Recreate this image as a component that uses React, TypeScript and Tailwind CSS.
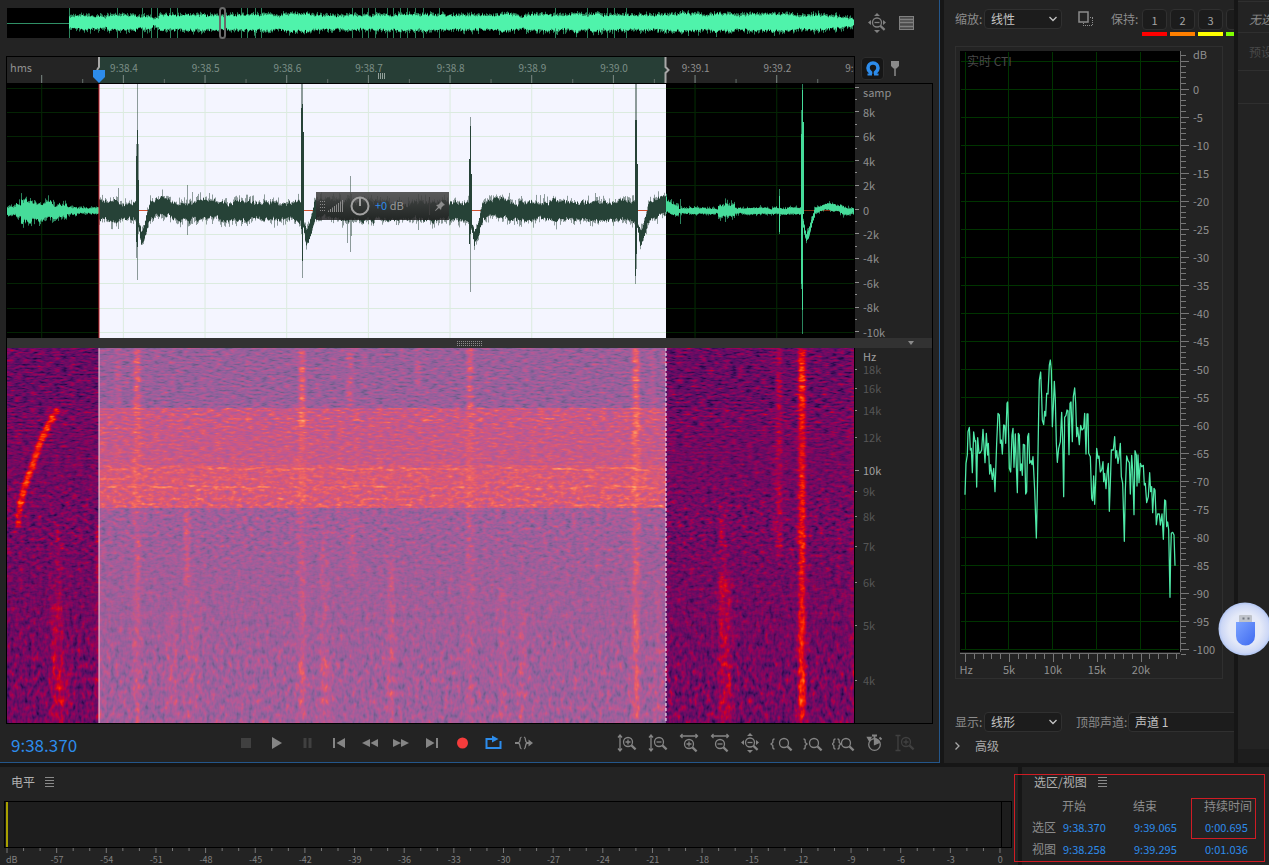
import type { ReactNode } from "react";

function createRandom(seed: number) {
  let s = seed;
  return () => {
    s = (s * 1664525 + 1013904223) % 4294967296;
    return s / 4294967296;
  };
}

/* ---------- overview waveform ---------- */
function buildOverview() {
  const rnd = createRandom(7);
  const spikes = [62, 110, 135, 144, 150, 163, 170, 234, 240, 248, 254, 345, 355, 361, 368, 380, 386, 393, 400, 408, 416, 432, 548, 580, 600, 607, 619];
  let core = "";
  let haze = "";
  let drift = 0;
  for (let x = 62; x < 847; x++) {
    drift = drift * 0.85 + (rnd() - 0.5) * 1.6;
    let a = 8.2;
    if (x < 100) a = 6.8;
    if (x > 128 && x < 152) a = 5.5;
    if (x > 145 && x < 149) a = 3.5;
    if (x > 812 && x < 830) a = 6;
    if (x > 829) a = 4;
    const t = Math.max(2, a + drift) * (0.75 + rnd() * 0.25);
    const b = Math.max(2, a + drift) * (0.75 + rnd() * 0.3);
    core += `M${x + 0.5} ${(14.5 - t).toFixed(1)}V${(14.5 + b).toFixed(1)}`;
    haze += `M${x + 0.5} ${(14.5 - t - rnd() * 3).toFixed(1)}V${(14.5 + b + rnd() * rnd() * 5).toFixed(1)}`;
  }
  spikes.forEach((x) => {
    haze += `M${x + 0.5} 0V30`;
  });
  return { core, haze };
}

/* ---------- main waveform ---------- */
const CLICKS = [130, 295, 463, 629, 795];

function baseline(x: number) {
  for (const c of CLICKS) {
    const d = x - c;
    if (d >= 1 && d < 4) return 8 + d * 5;
    if (d >= 4 && d < 7) return 27 - (d - 4) * 2;
    if (d >= 7 && d < 13) return 20 - (d - 7) * 3.5;
    if (d >= 13 && d < 40) return -4 * Math.sin(((d - 13) / 27) * Math.PI);
  }
  return 0;
}

function amplitude(x: number) {
  if (x < 92) {
    if (x < 9) return 4;
    if (x < 14) return 7;
    if (x < 25) return 13;
    if (x < 48) return 8.5;
    if (x < 60) return 7;
    if (x < 70) return 4;
    return 3;
  }
  if (x < 660) {
    for (const c of CLICKS) if (x - c > 0 && x - c < 12) return x - c < 3 ? 4 : 8;
    return 10;
  }
  if (x > 710 && x < 728) return 7;
  if (x < 672) return 5.5;
  if (x > 796 && x < 809) return 4;
  if (x > 832) return 4.2;
  return 3.1;
}

function buildWave() {
  const rnd = createRandom(41);
  const mid = 127;
  let core = "";
  let haze = "";
  let up = 0;
  let down = 0;
  for (let x = 0; x < 847; x++) {
    const a = amplitude(x);
    const m = mid + baseline(x);
    up = up * 0.75 + (rnd() - 0.5) * 0.34;
    down = down * 0.75 + (rnd() - 0.5) * 0.34;
    const t = a * (0.74 + up + rnd() * 0.25);
    const b = a * (0.74 + down + rnd() * 0.25);
    core += `M${x + 0.5} ${(m - t).toFixed(1)}V${(m + b).toFixed(1)}`;
    haze += `M${x + 0.5} ${(m - t - rnd() * rnd() * a * 0.9).toFixed(1)}V${(m + b + rnd() * rnd() * a * 0.8).toFixed(1)}`;
  }
  const solid: number[][] = [
    [129, 72, 158], [130, 46, 163], [131, 96, 140],
    [294, 24, 145], [295, 20, 177], [296, 48, 140],
    [462, 75, 160], [463, 42, 150], [464, 90, 140],
    [628, 36, 192], [629, 36, 170], [630, 80, 140],
    [794, 50, 200], [795, 6, 226], [796, 38, 130],
    [772, 112, 148],
  ];
  const faint: number[][] = [
    [111, 104, 145], [130, 0, 196], [129, 60, 174], [131, 60, 150], [180, 101, 151], [185, 108, 140],
    [295, 0, 194], [294, 0, 150], [340, 112, 159], [343, 92, 168], [344, 110, 152],
    [411, 110, 146], [463, 33, 208], [629, 0, 185], [628, 0, 200], [795, 0, 250], [794, 26, 205], [772, 105, 150],
    [718, 115, 138], [673, 115, 140],
  ];
  solid.forEach(([x, a, b]) => (core += `M${x + 0.5} ${a}V${b}`));
  faint.forEach(([x, a, b]) => (haze += `M${x + 0.5} ${a}V${b}`));
  return { core, haze };
}

const OVERVIEW = buildOverview();
const WAVE = buildWave();

/* ---------- spectrogram energy map ---------- */
type Mark = { x: number; y: number; w: number; h: number; o: number };

function buildBandMarks() {
  const rnd = createRandom(99);
  const marks: Mark[] = [];
  const lines: [number, number, number][] = [
    [60, 0.14, 0.7], [66, 0.14, 0.4], [71, 0.26, 0.4], [78, 0.11, 0.4], [84, 0.1, 0.4], [94, 0.16, 0.3], [102, 0.1, 0.4],
    [110, 0.1, 0.5], [120, 0.4, 0.8], [129, 0.24, 0.4], [138, 0.42, 0.85], [140, 0.24, 0.4], [150, 0.26, 0.5], [156, 0.34, 0.55],
  ];
  lines.forEach(([y, o, density]) => {
    let x = 92;
    while (x < 651) {
      const w = 4 + rnd() * 10;
      if (rnd() < density) marks.push({ x, y: y + Math.round(rnd() * 2 - 1), w: Math.min(w, 659 - x), h: 2, o: o * (0.5 + rnd() * 0.7) });
      x += w + rnd() * 2;
    }
  });
  return marks;
}
const BAND_MARKS = buildBandMarks();

function buildColumnMarks() {
  const rnd = createRandom(5);
  const marks: Mark[] = [];
  const columns: [number, number, number, number, number][] = [
    [130, 0, 56, 0.4, 7], [295, 0, 76, 0.44, 7], [463, 0, 60, 0.38, 7], [629, 0, 84, 0.5, 7], [795, 0, 60, 0.4, 8],
  ];
  columns.forEach(([x, a, b, o, w]) => {
    for (let y = a; y < b; y += 9) marks.push({ x: x - w / 2, y: y + 1, w, h: 6, o: o * (0.6 + rnd() * 0.6) });
  });
  return marks;
}
const COLUMN_MARKS = buildColumnMarks();

const STREAKS: [number, number, number, number, number][] = [
  [130, 0, 375, 7, 0.22], [295, 0, 375, 7, 0.23], [463, 0, 375, 7, 0.16], [629, 0, 375, 7, 0.28], [795, 0, 375, 7, 0.5],
  [772, 0, 210, 6, 0.26], [343, 0, 60, 7, 0.24], [345, 170, 230, 7, 0.2], [111, 0, 60, 6, 0.18], [180, 160, 240, 6, 0.28],
  [646, 0, 70, 5, 0.18], [411, 0, 50, 6, 0.12], [317, 180, 375, 7, 0.16], [320, 310, 365, 10, 0.18],
  [384, 210, 375, 8, 0.18], [165, 260, 375, 12, 0.13], [185, 240, 375, 14, 0.11], [496, 240, 375, 8, 0.14],
  [515, 250, 375, 8, 0.15], [52, 180, 250, 8, 0.14], [50, 250, 375, 12, 0.24], [58, 320, 360, 14, 0.18],
  [716, 160, 250, 8, 0.16], [718, 230, 375, 13, 0.26], [629, 210, 236, 6, 0.2], [629, 262, 300, 6, 0.26],
  [629, 318, 356, 6, 0.28], [795, 180, 200, 7, 0.16], [795, 270, 302, 7, 0.2], [795, 318, 360, 7, 0.22],
  [295, 310, 345, 6, 0.2], [91, 180, 375, 4, 0.2], [846, 0, 375, 4, 0.16], [652, 230, 375, 8, 0.12],
];

const MAP_R = "0.06 0.14 0.31 0.46 0.62 0.82 0.98 1 1";
const MAP_G = "0.02 0.03 0.06 0.04 0 0 0.12 0.38 0.62";
const MAP_B = "0.17 0.28 0.39 0.39 0.34 0.14 0 0.06 0.22";

function NoiseFilter({ id, freq, seed, gain }: { id: string; freq: string; seed: number; gain: number }) {
  return (
    <filter id={id} x="0" y="0" width="847" height="375" filterUnits="userSpaceOnUse" colorInterpolationFilters="sRGB">
      <feTurbulence type="fractalNoise" baseFrequency={freq} numOctaves={2} seed={seed} result="t" />
      <feColorMatrix in="t" type="matrix" values="1 0 0 0 0  1 0 0 0 0  1 0 0 0 0  0 0 0 0 1" result="n" />
      <feComposite in="SourceGraphic" in2="n" operator="arithmetic" k1={-0.5 * gain} k2={1 + gain * 0.25} k3={gain} k4={-gain / 2} result="m" />
      <feColorMatrix in="m" type="matrix" values="1 0 0 0 0  0 1 0 0 0  0 0 1 0 0  0 0 0 0 1" />
      <feComponentTransfer>
        <feFuncR type="table" tableValues={MAP_R} />
        <feFuncG type="table" tableValues={MAP_G} />
        <feFuncB type="table" tableValues={MAP_B} />
      </feComponentTransfer>
    </filter>
  );
}

function Energy() {
  return (
    <>
      <rect width="847" height="375" fill="#5e5e5e" />
      <rect width="847" height="60" fill="#000" opacity="0.08" />
      <g filter="url(#soft)">
        {STREAKS.map(([x, a, b, w, o], i) => (
          <rect key={i} x={x - w / 2} y={a} width={w} height={b - a} fill="#fff" opacity={o} />
        ))}
      </g>
      <rect x="92" y="60" width="567" height="100" fill="#fff" opacity="0.27" />
      <rect x="92" y="117" width="567" height="43" fill="#fff" opacity="0.14" />
      <g filter="url(#tiny)">
        {BAND_MARKS.map((m, i) => (
          <rect key={i} x={m.x} y={m.y} width={m.w} height={m.h} fill="#fff" opacity={m.o} />
        ))}
      </g>
      <g filter="url(#edge)">
        {COLUMN_MARKS.map((m, i) => (
          <rect key={i} x={m.x} y={m.y} width={m.w} height={m.h} rx="3" fill="#fff" opacity={m.o} />
        ))}
        <path d="M11 180Q12 165 13 158Q15 148 18 139Q21 128 25 120Q29 106 33 95L40 80Q44 70 51 61" fill="none" stroke="#fff" strokeWidth="6" opacity="0.45" />
        <path d="M13 158Q15 148 18 139Q21 128 25 120L33 95L40 80L51 61" fill="none" stroke="#fff" strokeWidth="7" strokeDasharray="6 4" opacity="0.5" />
      </g>
    </>
  );
}

function Spectrogram() {
  return (
    <svg viewBox="0 0 847 375" preserveAspectRatio="none" className="h-[375px] w-full" role="img" aria-label="频谱">
      <defs>
        <filter id="soft" x="-5%" y="-5%" width="110%" height="110%"><feGaussianBlur stdDeviation="1.4 3" /></filter>
        <filter id="edge" x="-5%" y="-5%" width="110%" height="110%"><feGaussianBlur stdDeviation="1" /></filter>
        <filter id="tiny" x="-5%" y="-5%" width="110%" height="110%"><feGaussianBlur stdDeviation="1 0.5" /></filter>
        <NoiseFilter id="noiseHigh" freq="0.13 0.5" seed={3} gain={0.85} />
        <NoiseFilter id="noiseMid" freq="0.17 0.3" seed={8} gain={0.85} />
        <NoiseFilter id="noiseLow" freq="0.24 0.14" seed={12} gain={0.85} />
        <linearGradient id="fadeMid" x1="0" y1="0" x2="0" y2="1">
          <stop offset="0.2" stopColor="#000" /><stop offset="0.42" stopColor="#fff" />
        </linearGradient>
        <linearGradient id="fadeLow" x1="0" y1="0" x2="0" y2="1">
          <stop offset="0.5" stopColor="#000" /><stop offset="0.85" stopColor="#fff" />
        </linearGradient>
        <mask id="maskMid"><rect width="847" height="375" fill="url(#fadeMid)" /></mask>
        <mask id="maskLow"><rect width="847" height="375" fill="url(#fadeLow)" /></mask>
      </defs>
      <g filter="url(#noiseHigh)"><Energy /></g>
      <g mask="url(#maskMid)"><g filter="url(#noiseMid)"><Energy /></g></g>
      <g mask="url(#maskLow)"><g filter="url(#noiseLow)"><Energy /></g></g>
      <rect x="92" width="567" height="375" fill="#f4f4ff" opacity="0.36" />
      <path d="M92 0V375" stroke="#f0d0d8" strokeWidth="1" />
      <path d="M659 0V375" stroke="#fff" strokeWidth="1" strokeDasharray="3 2" />
    </svg>
  );
}

const GRID_X = Array.from({ length: 10 }, (_, k) => 34.7 + 81.67 * k);
const GRID_Y = Array.from({ length: 11 }, (_, k) => Math.round(3.5 + 24.45 * k) + 0.5);

function Waveform() {
  return (
    <svg viewBox="0 0 847 254" preserveAspectRatio="none" className="h-[254px] w-full bg-black" role="img" aria-label="波形">
      <defs>
        <clipPath id="inSel"><rect x="92" width="567" height="254" /></clipPath>
        <clipPath id="outSel"><path d="M0 0H92V254H0ZM659 0H847V254H659Z" /></clipPath>
      </defs>
      <rect x="92" width="567" height="254" fill="#f4f5ff" />
      <g clipPath="url(#outSel)">
        {GRID_X.map((x) => <path key={x} d={`M${x} 0V254`} stroke="#042404" />)}
        {GRID_Y.map((y) => <path key={y} d={`M0 ${y}H847`} stroke="#042404" />)}
        <path d="M0 126.5H847" stroke="#7a2a12" />
        <path d={WAVE.haze} stroke="#48dd9c" opacity="0.6" />
        <path d={WAVE.core} stroke="#46dc9a" />
      </g>
      <g clipPath="url(#inSel)">
        {GRID_X.map((x) => <path key={x} d={`M${x} 0V254`} stroke="#dbebdf" />)}
        {GRID_Y.map((y) => <path key={y} d={`M0 ${y}H847`} stroke="#dbebdf" />)}
        <path d="M0 126.5H847" stroke="#d05030" />
        <path d={WAVE.haze} stroke="#264237" opacity="0.5" />
        <path d={WAVE.core} stroke="#264237" />
      </g>
      <path d="M92 0V254" stroke="#c8242c" />
    </svg>
  );
}

const HOURS = ["9:38.4", "9:38.5", "9:38.6", "9:38.7", "9:38.8", "9:38.9", "9:39.0", "9:39.1", "9:39.2", "9:39.3"];
const pct = (x: number, total: number) => `${((x / total) * 100).toFixed(3)}%`;

function TimeRuler() {
  return (
    <svg className="h-[26px] w-full bg-[#242424] text-[10px]" role="img" aria-label="时间标尺">
      <rect x={pct(92, 847)} width={pct(567, 847)} height="26" fill="#273e36" />
      {GRID_X.map((x) => <line key={x} x1={pct(x, 847)} x2={pct(x, 847)} y1="18" y2="26" stroke="#7d8a85" />)}
      {GRID_X.map((x) => <line key={x} x1={pct(x + 41, 847)} x2={pct(x + 41, 847)} y1="22" y2="26" stroke="#66706c" />)}
      <text x="3" y="15" fill="#8f8f8f" className="text-[11px]">hms</text>
      {HOURS.map((h, k) => (
        <text key={h} x={pct(117 + 81.67 * k, 847)} y="15" textAnchor="middle" fill={k < 7 ? "#7c8e87" : "#8f8f8f"}>{h}</text>
      ))}
      <path d="M371.5 16v6m2-6v6m2-6v6m2-6v6" stroke="#93a19b" />
      <path d="M92 0V10L90 13" stroke="#a8a8a8" strokeWidth="2" fill="none" />
      <path d="M86 13H98V20L92 26L86 20Z" fill="#2d8ceb" />
      <svg x={pct(658.5, 847)} width="8" height="26" overflow="visible"><path d="M0 0V10L3 13L0 16V26" stroke="#a8a8a8" strokeWidth="2" fill="none" /></svg>
    </svg>
  );
}

function AmplitudeAxis() {
  const labels = ["8k", "6k", "4k", "2k", "0", "-2k", "-4k", "-6k", "-8k", "-10k"];
  return (
    <svg className="h-[254px] w-full text-[11px]" fill="#8f8f8f" role="img" aria-label="振幅">
      {Array.from({ length: 21 }, (_, k) => (
        <path key={k} d={`M0 ${Math.round(3 + k * 12.2) + 0.5}h${k % 2 ? 2 : 4}`} stroke="#8f8f8f" />
      ))}
      <text x="8" y="13">samp</text>
      {labels.map((l, k) => <text key={l} x="8" y={Math.round(33 + k * 24.4)}>{l}</text>)}
    </svg>
  );
}

function FrequencyAxis() {
  const labels: [string, number][] = [["18k", 22], ["16k", 41], ["14k", 63], ["12k", 90], ["10k", 123], ["9k", 144], ["8k", 169], ["7k", 199], ["6k", 235], ["5k", 278], ["4k", 333]];
  return (
    <svg className="h-[375px] w-full text-[11px]" role="img" aria-label="频率">
      <text x="8" y="13" fill="#a0a0a0">Hz</text>
      {labels.map(([l, y]) => (
        <g key={l}>
          <path d={`M0 ${y - 0.5}h${l === "10k" ? 4 : 2}`} stroke="#8f8f8f" />
          <text x="8" y={y + 4} fill={l === "10k" ? "#a0a0a0" : "#565656"}>{l}</text>
        </g>
      ))}
    </svg>
  );
}

/* ---------- frequency analysis chart ---------- */
const TRACE =
  "75,464 78,370 82,345 84,275 88,262 91,330 94,325 97,398 101,276 105,305 107,302 110,441 113,293 117,340 121,338 125,330 129,268 135,368 139,280 143,345 145,310 149,402 152,374 157,418 161,385 165,455 170,310 174,220 178,225 181,310 184,300 187,342 191,255 194,256 197,310 201,190 203,186 206,290 208,385 212,396 216,285 219,265 222,382 226,282 229,380 232,458 235,280 238,285 241,392 244,372 247,406 250,313 254,315 257,462 260,455 263,290 266,280 269,370 273,362 276,374 279,350 284,450 289,594 292,460 296,220 298,120 302,96 305,170 307,240 311,254 314,214 317,228 320,160 324,162 328,75 331,60 334,90 337,260 340,200 343,124 346,180 349,310 352,367 356,325 361,305 365,217 368,300 371,470 374,232 378,226 381,210 384,212 387,344 390,190 393,186 397,305 400,170 404,144 407,190 410,290 413,262 418,314 422,256 426,270 431,265 434,220 438,342 441,222 444,222 446,340 451,350 455,475 458,482 461,408 464,493 467,420 470,325 474,355 477,348 481,396 485,390 489,365 491,425 494,400 498,446 502,392 505,370 508,514 512,400 514,330 520,330 524,290 527,354 530,332 534,370 537,350 541,310 544,410 548,430 553,604 556,450 560,348 564,362 568,368 571,462 575,346 578,390 582,524 585,332 589,345 591,438 594,345 597,428 601,370 605,380 610,376 613,435 616,430 620,488 625,470 629,398 632,455 635,440 638,518 642,445 645,450 649,554 653,522 658,522 661,555 666,522 670,598 674,480 677,482 680,560 683,546 686,570 690,772 692,640 694,580 698,577 702,585 705,677";

function SpectrumChart() {
  const xs = [10, 53, 97, 141, 185];
  return (
    <svg className="h-[633px] w-full text-[11px]" fill="#909090" role="img" aria-label="频率分析">
      <rect x="5" y="5" width="220" height="601" fill="#000" />
      {xs.map((x) => <path key={x} d={`M${x}.5 6V604`} stroke="#003400" />)}
      {Array.from({ length: 22 }, (_, k) => (
        <path key={k} d={`M6 ${Math.round(14.6 + k * 28) + 0.5}H224`} stroke="#003400" />
      ))}
      <text x="12" y="20" fill="#484848" className="text-[12px]">实时 CTI</text>
      <path d="M225.5 5V606M5 607.5H225" stroke="#6e6e6e" />
      {Array.from({ length: 108 }, (_, k) => (
        <path key={k} d={`M226 ${Math.round(9 + k * 5.6) + 0.5}h${(k - 1) % 5 === 0 ? 8 : 5}`} stroke="#777" />
      ))}
      <text x="238" y="13">dB</text>
      {Array.from({ length: 21 }, (_, k) => (
        <text key={k} x="238" y={Math.round(48 + k * 28)}>{k === 0 ? "0" : `-${k * 5}`}</text>
      ))}
      {Array.from({ length: 25 }, (_, k) => (
        <path key={k} d={`M${Math.round(10 + k * 8.78)}.5 608v${k % 5 === 0 ? 8 : 5}`} stroke="#777" />
      ))}
      {["Hz", "5k", "10k", "15k", "20k"].map((l, k) => (
        <text key={l} x={xs[k] + 1} y="628" textAnchor="middle">{l}</text>
      ))}
      <g transform="translate(-15 294) scale(0.333333)">
        <polyline points={TRACE} fill="none" stroke="#4fe9a8" strokeWidth="3.8" strokeLinejoin="round" />
      </g>
    </svg>
  );
}

/* ---------- icons ---------- */
function Glyph({ children }: { children: ReactNode }) {
  return (
    <svg viewBox="0 0 24 20" className="h-5 w-6" fill="none" stroke="currentColor" strokeWidth="1.3" aria-hidden="true">
      {children}
    </svg>
  );
}

function ToolButton({ label, tone = "text-[#858585]", children }: { label: string; tone?: string; children: ReactNode }) {
  return (
    <button type="button" aria-label={label} className={`flex h-8 w-[31px] items-center justify-center ${tone}`}>
      <Glyph>{children}</Glyph>
    </button>
  );
}

function Lens({ x = 13, y = 9, sign = "" }: { x?: number; y?: number; sign?: string }) {
  return (
    <g transform={`translate(${x} ${y})`}>
      <circle r="4.5" />
      <path d="M3.4 3.4L7.6 7.4" strokeWidth="2.2" />
      {sign && <path d={sign === "+" ? "M-2.5 0H2.5M0 -2.5V2.5" : "M-2.5 0H2.5"} />}
    </g>
  );
}

const V_ARROW = "M5 3V17M3 4.5L5 2L7 4.5M3 15.5L5 18L7 15.5";
const H_ARROW = "M4 3H20M5.5 1L3.5 3L5.5 5M18.5 1L20.5 3L18.5 5";
const BRACE_OPEN = "M2.5 0Q0.8 0 0.8 2V3.5L-1 5L0.8 6.5V8Q0.8 10 2.5 10";
const BRACE_CLOSE = "M-2.5 0Q-0.8 0 -0.8 2V3.5L1 5L-0.8 6.5V8Q-0.8 10 -2.5 10";

function FourWay() {
  return (
    <>
      <Lens x={12} y={9.5} sign="-" />
      <path d="M12 0L15 3H9ZM12 20L9 17H15ZM3 9.5L6 7V12ZM21 9.5L18 7V12Z" fill="currentColor" stroke="none" />
    </>
  );
}

function Menu() {
  return (
    <button type="button" aria-label="面板菜单" className="text-[#8a8a8a]">
      <svg className="h-[10px] w-[9px]" stroke="currentColor" aria-hidden="true"><path d="M0 0.5H9M0 3.5H9M0 6.5H9M0 9.5H9" /></svg>
    </button>
  );
}

function Dropdown({ id, value, width, arrow = true }: { id: string; value: string; width: string; arrow?: boolean }) {
  return (
    <span className={`relative flex shrink-0 items-center ${width}`}>
      <select id={id} defaultValue={value} className="h-5 w-full appearance-none rounded-sm border border-[#303030] bg-[#1c1c1c] pl-[6px] text-[12px] leading-4 text-[#c4c4c4]">
        <option>{value}</option>
      </select>
      {arrow && (
        <svg viewBox="0 0 8 6" className="pointer-events-none absolute right-[5px] h-[6px] w-2" fill="none" stroke="#c4c4c4" strokeWidth="1.3" aria-hidden="true">
          <path d="M0.5 1L4 4.5L7.5 1" />
        </svg>
      )}
    </span>
  );
}

function GainHud() {
  return (
    <div className="absolute top-[108px] left-[309px] flex h-7 w-[133px] items-center gap-[5px] bg-linear-to-b from-[#484848]/90 to-[#222]/85 pl-[3px] text-[11px] leading-4 text-[#9a9a9a]">
      <svg className="h-4 w-[26px]" aria-hidden="true">
        <path d="M1 3.5h5M1 6.5h5M1 9.5h5M1 12.500h5" stroke="#8a8a8a" strokeDasharray="1 1" />
        {[0, 1, 2, 3, 4, 5, 6, 7].map((k) => <path key={k} d={`M${9.5 + k * 2} 14V${12.5 - k * 1.5}`} stroke="#8a8a8a" />)}
      </svg>
      <svg viewBox="0 0 20 20" className="h-5 w-5" fill="none" stroke="#a0a0a0" strokeWidth="2" aria-hidden="true">
        <circle cx="10" cy="10" r="8.5" /><path d="M10 2V10" />
      </svg>
      <span className="pb-[2px] whitespace-nowrap"><span className="text-[#2d8ceb]">+0</span> dB</span>
      <button type="button" aria-label="固定" className="mr-1 ml-auto border-l border-[#3c3c3c] py-1 pl-[5px] text-[#8c8c8c]">
        <svg viewBox="0 0 10 10" className="h-[10px] w-[10px]" fill="currentColor" aria-hidden="true">
          <path d="M6 0L10 4L8.5 4.5L6.5 6.5L6 9L4 7L0.5 10L0 9.5L3 6L1 4L3.5 3.5L5.5 1.5Z" />
        </svg>
      </button>
    </div>
  );
}

function EditorPanel() {
  return (
    <section className="flex min-w-0 flex-col border-r border-b border-[#24568a] bg-[#232323] pt-2">
      <div className="flex h-[30px] items-center pl-[7px]">
        <div className="relative min-w-0 flex-1">
          <svg viewBox="0 0 847 30" preserveAspectRatio="none" className="h-[30px] w-full bg-black" role="img" aria-label="概览">
            <path d="M0 15.5H62" stroke="#2f8f66" />
            <path d={OVERVIEW.haze} stroke="#4ff0a8" opacity="0.55" />
            <path d={OVERVIEW.core} stroke="#4ff3ab" />
          </svg>
          <div className="absolute top-[-1px] left-[25%] h-8 w-[7px] rounded-full border-2 border-[#6a6a6a]" />
        </div>
        <div className="flex w-[85px] items-center gap-[10px] pl-[11px] text-[#808080]">
          <button type="button" aria-label="全部缩小"><Glyph><FourWay /></Glyph></button>
          <button type="button" aria-label="列表视图">
            <svg className="h-[15px] w-4" fill="none" stroke="currentColor" aria-hidden="true">
              <rect x="0.5" y="0.5" width="14" height="13" fill="#4a4a4a" /><path d="M0 3.5H15M0 6.5H15M0 10.5H15" strokeWidth="1.5" />
            </svg>
          </button>
        </div>
      </div>

      <div className="mt-[18px] mr-[6px] ml-[6px] flex items-end">
        <div className="min-w-0 flex-1 border border-b-0 border-black"><TimeRuler /></div>
        <div className="flex h-[27px] w-[78px] items-start gap-[6px] pt-px pl-[6px]">
          <button type="button" aria-label="吸附" className="flex h-[23px] w-[23px] items-center justify-center rounded-sm border border-[#2c2c2c] bg-[#161616]">
            <svg viewBox="0 0 16 16" className="h-4 w-4" fill="none" stroke="#2d8ceb" aria-hidden="true">
              <path d="M5.500 13V11.500Q3 9.500 3 7A5 5 0 0 1 13 7Q13 9.500 10.500 11.500V13" strokeWidth="3.600" /><path d="M2.500 13.500H7M9 13.500H13.500" strokeWidth="2" />
            </svg>
          </button>
          <button type="button" aria-label="标记" className="pt-1 pl-px">
            <svg viewBox="0 0 8 15" className="h-[15px] w-2" aria-hidden="true"><path d="M0 0H8V5L5.5 7.5H2.5L0 5Z" fill="#8a8a8a" /><path d="M4 6V15" stroke="#8a8a8a" strokeWidth="1.5" /></svg>
          </button>
        </div>
      </div>

      <div className="mr-[6px] ml-[6px] border border-black">
        <div className="flex">
          <div className="relative min-w-0 flex-1"><Waveform /><GainHud /></div>
          <div className="w-[78px] border-l border-black"><AmplitudeAxis /></div>
        </div>
        <div className="flex h-[10px] items-center bg-[#323232] pr-[18px] pl-6">
          <div className="flex flex-1 justify-center">
            <svg className="h-[5px] w-[26px]" aria-hidden="true"><path d="M0 0.5H26M0 2.5H26M0 4.5H26" stroke="#8a8a8a" strokeDasharray="1 1" /></svg>
          </div>
          <svg className="h-1 w-[6px]" aria-hidden="true"><path d="M0 0H6L3 4Z" fill="#8a8a8a" /></svg>
        </div>
        <div className="flex">
          <div className="min-w-0 flex-1"><Spectrogram /></div>
          <div className="w-[78px] border-l border-black"><FrequencyAxis /></div>
        </div>
      </div>

      <div className="flex flex-1 items-center">
        <div className="w-[230px] pt-[3px] pl-[11px] text-[17px] leading-5 text-[#2d8ceb]">9:38.370</div>
        <div className="flex">
          <ToolButton label="停止" tone="text-[#404040]"><rect x="7" y="5" width="10" height="10" fill="currentColor" stroke="none" /></ToolButton>
          <ToolButton label="播放"><path d="M7 4L17 10L7 16Z" fill="currentColor" stroke="none" /></ToolButton>
          <ToolButton label="暂停" tone="text-[#404040]"><path d="M9 5V15M14 5V15" strokeWidth="3" /></ToolButton>
          <ToolButton label="上一个"><path d="M7 5V15" strokeWidth="2" /><path d="M18 5V15L9.5 10Z" fill="currentColor" stroke="none" /></ToolButton>
          <ToolButton label="快退"><path d="M12 6V14L4 10ZM20 6V14L12.5 10Z" fill="currentColor" stroke="none" /></ToolButton>
          <ToolButton label="快进"><path d="M4 6V14L12 10ZM12 6V14L20 10Z" fill="currentColor" stroke="none" /></ToolButton>
          <ToolButton label="下一个"><path d="M17 5V15" strokeWidth="2" /><path d="M6 5V15L14.500 10Z" fill="currentColor" stroke="none" /></ToolButton>
          <ToolButton label="录制" tone="text-[#f53c3c]"><circle cx="11.500" cy="10" r="5.500" fill="currentColor" stroke="none" /></ToolButton>
          <ToolButton label="循环播放" tone="text-[#2d8ceb]">
            <path d="M9 6H4.500V15H18.500V8" strokeWidth="2" /><path d="M8 6H12" strokeWidth="2" /><path d="M10 2.500L16.500 6L10 9.500Z" fill="currentColor" stroke="none" />
          </ToolButton>
          <ToolButton label="跳过所选项目">
            <path d="M8.500 4Q7 4.500 7 7Q7 9.500 5 10Q7 10.500 7 13Q7 15.500 8.500 16M11 4Q12.500 4.500 12.500 7Q12.500 9.500 14.500 10Q12.500 10.500 12.500 13Q12.500 15.500 11 16" />
            <path d="M2 10H6M13.500 10H17" strokeWidth="2" /><path d="M15.500 6.500L20 10L15.500 13.500Z" fill="currentColor" stroke="none" />
          </ToolButton>
        </div>
        <div className="mr-[18px] ml-auto flex">
          <ToolButton label="垂直放大"><path d={V_ARROW} /><Lens sign="+" /></ToolButton>
          <ToolButton label="垂直缩小"><path d={V_ARROW} /><Lens sign="-" /></ToolButton>
          <ToolButton label="水平放大"><path d={H_ARROW} /><Lens x={12} y={11} sign="+" /></ToolButton>
          <ToolButton label="水平缩小"><path d={H_ARROW} /><Lens x={12} y={11} sign="-" /></ToolButton>
          <ToolButton label="全部缩小"><g transform="translate(-1 0)"><FourWay /></g></ToolButton>
          <ToolButton label="放大入点"><path d={BRACE_OPEN} transform="translate(2 6)" /><Lens x={14} y={10} /></ToolButton>
          <ToolButton label="放大出点"><path d={BRACE_CLOSE} transform="translate(5 6)" /><Lens x={13} y={10} /></ToolButton>
          <ToolButton label="缩放至选区"><path d={BRACE_OPEN} transform="translate(1 6)" /><path d={BRACE_CLOSE} transform="translate(8 6)" /><Lens x={14} y={10} /></ToolButton>
          <ToolButton label="按时间缩放">
            <circle cx="11.500" cy="11.500" r="5.800" /><path d="M11.500 11.500V6A5.500 5.500 0 0 1 16.500 9.500Z" fill="currentColor" /><path d="M9 2.500H14M11.500 2.500V5.500M16.500 4.500L18.500 6.500" strokeWidth="1.800" /><path d="M6.500 8L8 4.500L4.500 4.500Z" fill="currentColor" />
          </ToolButton>
          <ToolButton label="恢复缩放" tone="text-[#404040]"><path d="M4 2V18M1.500 2.500H6.500M1.500 17.500H6.500" /><Lens x={12} sign="+" /></ToolButton>
        </div>
      </div>
    </section>
  );
}

const HOLD: [string, string][] = [["1", "bg-[#ff0000]"], ["2", "bg-[#ff7f00]"], ["3", "bg-[#ffff00]"], ["4", "bg-[#7fff00]"]];

function AnalysisPanel() {
  return (
    <section className="flex min-w-0 flex-col overflow-hidden bg-[#232323] pt-[9px] text-[12px] leading-4 text-[#8c8c8c]">
      <div className="flex h-[37px] items-start pl-[11px]">
        <label htmlFor="scale" className="w-[29px] shrink-0 pt-[2px]">缩放:</label>
        <Dropdown id="scale" value="线性" width="w-[78px]" />
        <button type="button" aria-label="复制" className="mr-[17px] ml-4 shrink-0 pt-[2px]">
          <svg className="h-4 w-4" fill="none" stroke="#8c8c8c" aria-hidden="true">
            <rect x="1" y="1" width="9" height="10" strokeWidth="1.500" /><path d="M12 6.500H15M14.500 7V15M5 14.500H15M5.500 12V15" strokeDasharray="1 1" />
          </svg>
        </button>
        <span className="w-[31px] shrink-0 pt-[2px]">保持:</span>
        <div className="flex min-w-0 flex-1 gap-[3px] overflow-hidden">
          {HOLD.map(([n, color]) => (
            <div key={n} className="flex w-[25px] shrink-0 flex-col gap-[2px]">
              <button type="button" aria-label={`保持 ${n}`} className="h-[21px] w-full rounded-sm border border-[#303030] bg-[#1c1c1c] text-[11px] leading-4 text-[#a4a4a4]">{n === "4" ? "" : n}</button>
              <div className={`h-1 ${color}`} />
            </div>
          ))}
        </div>
      </div>
      <div className="mr-[11px] ml-[11px] outline-1 -outline-offset-1 outline-[#2f2f2f]"><SpectrumChart /></div>
      <div className="mt-[33px] flex items-center pl-[11px]">
        <label htmlFor="view" className="w-[29px] shrink-0">显示:</label>
        <Dropdown id="view" value="线形" width="w-[78px]" />
        <label htmlFor="channel" className="ml-[14px] w-[52px] shrink-0">顶部声道:</label>
        <Dropdown id="channel" value="声道 1" width="w-[140px]" arrow={false} />
      </div>
      <button type="button" className="mt-[6px] flex items-center gap-[15px] pl-[11px] text-[#a8a8a8]">
        <svg viewBox="0 0 5 8" className="h-2 w-[5px]" fill="none" stroke="currentColor" strokeWidth="1.300" aria-hidden="true"><path d="M0.500 0.500L4 4L0.500 7.500" /></svg>
        高级
      </button>
    </section>
  );
}

function SidePanel() {
  return (
    <section className="flex min-w-0 flex-col overflow-hidden bg-[#232323] text-[12px] leading-4 whitespace-nowrap">
      <div className="mt-px flex h-8 items-center border-y border-[#2f2f2f] pt-1 pl-[11px] text-[#8c8c8c] italic">无选择</div>
      <div className="flex h-[38px] items-center border-b border-[#2f2f2f] pl-[11px] text-[#484848]">预设:</div>
      <div className="h-[33px] border-b border-[#2f2f2f]" />
      <div className="flex-1" />
      <div className="h-[14px] bg-[#1d1d1d]" />
    </section>
  );
}

function LevelsPanel() {
  return (
    <section className="flex min-w-0 flex-col bg-[#232323]">
      <div className="flex h-[34px] items-center gap-[10px] pb-1 pl-[11px] text-[12px] text-[#b0b0b0]">
        <h2>电平</h2>
        <Menu />
      </div>
      <div className="mr-[6px] ml-1 flex h-[47px] border border-black bg-[#1d1d1d]">
        <div className="flex-1 border-r border-black pl-px"><div className="h-full w-[2px] bg-[#a8a000]" /></div>
        <div className="w-[9px]" />
      </div>
      <svg className="mr-4 h-[17px] w-auto overflow-visible text-[9px]" fill="#808080" role="img" aria-label="电平标尺">
        {Array.from({ length: 61 }, (_, k) => {
          const x = pct(7 + (k * 993) / 60, 1002);
          return <line key={k} x1={x} x2={x} y1="0" y2={k % 3 ? 3 : 5} stroke="#777" />;
        })}
        <text x="6" y="15">dB</text>
        {Array.from({ length: 20 }, (_, k) => (
          <text key={k} x={pct(57 + k * 49.65, 1002)} y="15" textAnchor="middle">{k === 19 ? "0" : `-${57 - k * 3}`}</text>
        ))}
      </svg>
    </section>
  );
}

function SelectionPanel() {
  return (
    <section className="relative min-w-0 bg-[#232323] text-[12px] text-[#8c8c8c]">
      <div className="flex h-[29px] items-center gap-[11px] pl-3 text-[#b0b0b0]">
        <h2>选区/视图</h2>
        <Menu />
      </div>
      <table className="ml-[10px] border-collapse leading-5">
        <thead>
          <tr className="text-left">
            <th className="w-[30px] p-0" />
            <th className="w-[71px] p-0 font-normal">开始</th>
            <th className="w-[71px] p-0 font-normal">结束</th>
            <th className="p-0 font-normal whitespace-nowrap">持续时间</th>
          </tr>
        </thead>
        <tbody className="text-[#2d8ceb]">
          {[["选区", "9:38.370", "9:39.065", "0:00.695"], ["视图", "9:38.258", "9:39.295", "0:01.036"]].map(([name, ...values]) => (
            <tr key={name} className="h-[22px]">
              <th className="p-0 text-left font-normal text-[#8c8c8c]">{name}</th>
              {values.map((v) => <td key={v} className="p-0 pl-px text-[11px]">{v}</td>)}
            </tr>
          ))}
        </tbody>
      </table>
      <div className="pointer-events-none absolute top-[7px] right-1 -left-2 h-[88px] border border-[#d01c24]" />
      <div className="pointer-events-none absolute top-[31px] right-[13px] h-[41px] w-[65px] border border-[#d01c24]" />
    </section>
  );
}

function UsbBadge() {
  return (
    <button type="button" aria-label="USB 设备" className="absolute top-[602px] -right-[3px] h-[54px] w-[54px]">
      <svg viewBox="0 0 54 54" className="h-full w-full" aria-hidden="true">
        <defs>
          <radialGradient id="disc"><stop offset="0.6" stopColor="#e4e9f8" /><stop offset="0.9" stopColor="#ccd7f6" /><stop offset="1" stopColor="#b0c4f2" /></radialGradient>
          <linearGradient id="stick" x1="0" y1="0" x2="1" y2="1"><stop offset="0" stopColor="#7ba2ff" /><stop offset="1" stopColor="#3f6af0" /></linearGradient>
        </defs>
        <circle cx="27" cy="27" r="26.500" fill="url(#disc)" />
        <rect x="21" y="13" width="13" height="9" rx="1" fill="#bfc3ca" />
        <path d="M24.500 16.500h2M29.500 16.500h2" stroke="#707680" strokeWidth="2" />
        <path d="M18 20H37V34A9.500 9.500 0 0 1 18 34Z" fill="url(#stick)" />
      </svg>
    </button>
  );
}

export default function App() {
  return (
    <main className="relative flex min-h-screen flex-col gap-1 overflow-hidden bg-[#161616] font-['Noto_Sans_CJK_SC',sans-serif]">
      <div className="grid min-h-[763px] grid-cols-[minmax(0,1fr)_290px_31px] gap-1">
        <EditorPanel />
        <AnalysisPanel />
        <SidePanel />
      </div>
      <div className="grid flex-1 grid-cols-[minmax(0,1fr)_247px] gap-1">
        <LevelsPanel />
        <SelectionPanel />
      </div>
      <UsbBadge />
    </main>
  );
}
